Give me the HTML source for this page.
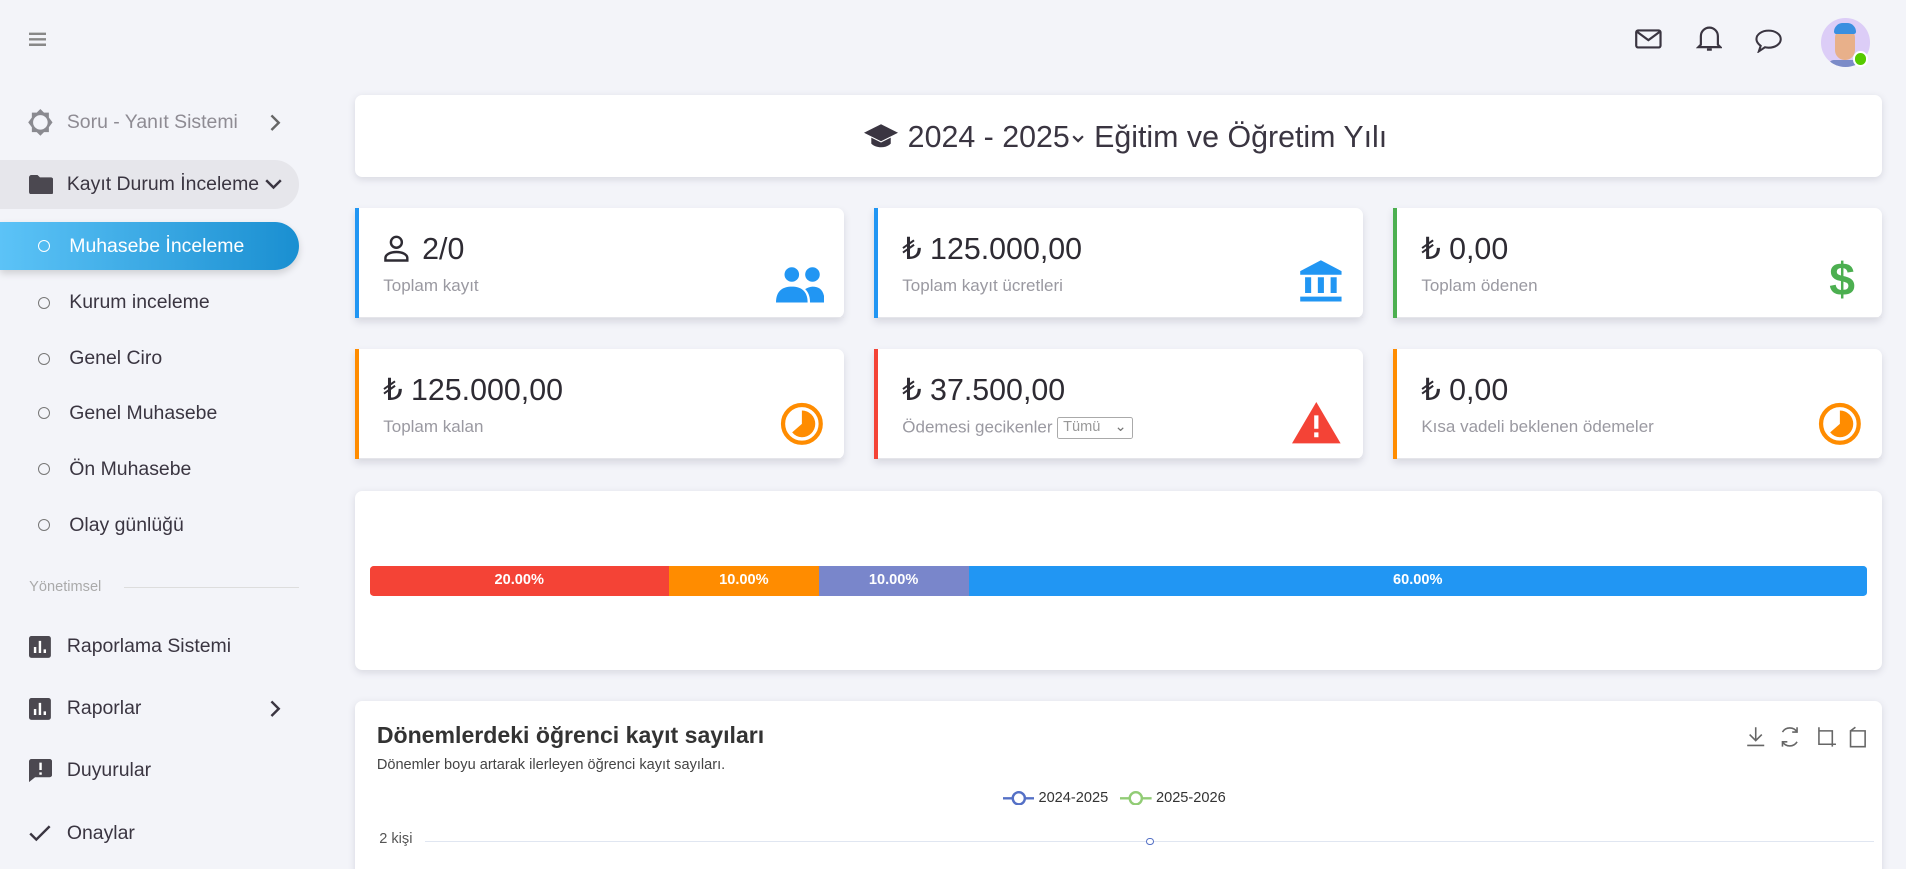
<!DOCTYPE html>
<html><head><meta charset="utf-8">
<style>
*{box-sizing:border-box;margin:0;padding:0}
html,body{width:1906px;height:869px;overflow:hidden;background:#f3f4f9}
#r{zoom:1.21556;width:1568px;height:715px;position:relative;font-family:"Liberation Sans",sans-serif;color:#333}
.a{position:absolute}
.nav{position:absolute;left:0;width:246px;height:40px;display:flex;align-items:center;font-size:16px;color:#3a3541}
.sub{padding-left:31px}
.sub .c{width:10px;height:10px;border:1.4px solid #777;border-radius:50%;margin-right:16px}
.card{position:absolute;background:#fff;border-radius:6px;box-shadow:0 2px 6px rgba(60,60,90,.15)}
.st{position:absolute;width:402px;height:91px;background:#fff;border-radius:0 6px 6px 0;box-shadow:0 3px 6px rgba(60,60,90,.15);border-left:4px solid}
.st .v{position:absolute;left:20px;top:20px;font-size:25px;color:#2e2b33}
.st .l{position:absolute;left:20px;top:56px;font-size:14px;color:#9a99a1}
.st .i{position:absolute;right:16px;top:44px}
.st:after{content:"";position:absolute;left:0;right:0;bottom:0;border-bottom:1px solid #e5e5ea}
.chev{position:absolute;left:221px}
</style></head><body><div id="r">
<svg class="a" style="left:24px;top:26px" width="14" height="12"><path d="M0 1.5h14M0 6h14M0 10.5h14" stroke="#888" stroke-width="2"/></svg>
<svg class="a" style="left:1345px;top:23px" width="22" height="18"><rect x="1" y="2" width="20" height="14" rx="1.5" fill="none" stroke="#3a3541" stroke-width="1.8"/><path d="M1.5 3l9.5 7 9.5-7" fill="none" stroke="#3a3541" stroke-width="1.8"/></svg>
<svg class="a" style="left:1395px;top:20px" width="22" height="24"><path d="M4 17V10a7 7 0 0114 0v7l2 2H2z" fill="none" stroke="#3a3541" stroke-width="1.8"/><path d="M9 21h4" stroke="#3a3541" stroke-width="2"/></svg>
<svg class="a" style="left:1443px;top:22px" width="24" height="22"><path d="M12 3c5.5 0 10 3 10 7s-4.5 7-10 7c-1 0-2 0-3-.3L4 20l1.5-4.5C3.5 14 2 12 2 10c0-4 4.5-7 10-7z" fill="none" stroke="#3a3541" stroke-width="1.7"/></svg>
<div class="a" style="left:1498px;top:15px;width:40px;height:40px;border-radius:50%;background:#dccdf7;overflow:hidden"><div class="a" style="left:12px;top:8px;width:16px;height:26px;border-radius:8px;background:#e8b08a"></div><div class="a" style="left:11px;top:4px;width:18px;height:9px;border-radius:8px 8px 2px 2px;background:#3a8fe0"></div><div class="a" style="left:7px;top:34px;width:26px;height:8px;background:#7b8bc8;border-radius:6px"></div></div>
<div class="a" style="left:1524px;top:42px;width:13px;height:13px;border-radius:50%;background:#56ca00;border:2px solid #fff"></div>

<div class="nav" style="top:81px;color:#8e8b93;padding-left:22px"><svg width="22" height="22" style="margin-right:11px"><path d="M11 0l3 3h4v4l3 4-3 4v4h-4l-3 3-3-3H4v-4l-3-4 3-4V3h4z" fill="#8a8a90"/><circle cx="11" cy="11" r="6" fill="#f3f4f9"/></svg>Soru - Yanıt Sistemi<svg class="chev" width="10" height="16"><path d="M2 2l6 6-6 6" fill="none" stroke="#666" stroke-width="2"/></svg></div>
<div class="nav" style="top:132px;background:#e6e6eb;border-radius:0 20px 20px 0;padding-left:24px"><svg width="20" height="16" style="margin-right:11px"><path d="M0 2a2 2 0 012-2h5l2 2h9a2 2 0 012 2v10a2 2 0 01-2 2H2a2 2 0 01-2-2z" fill="#4b4850"/></svg>Kayıt Durum İnceleme<svg width="14" height="9" style="margin-left:5px"><path d="M1 1l6 6 6-6" fill="none" stroke="#3a3541" stroke-width="2"/></svg></div>
<div class="nav sub" style="top:183px;height:39px;background:linear-gradient(90deg,#5cc3f7,#1a8fd1);border-radius:0 20px 20px 0;color:#fff;box-shadow:0 3px 6px rgba(0,0,0,.15)"><span class="c" style="border-color:#fff"></span>Muhasebe İnceleme</div>
<div class="nav sub" style="top:229px"><span class="c"></span>Kurum inceleme</div>
<div class="nav sub" style="top:275px"><span class="c"></span>Genel Ciro</div>
<div class="nav sub" style="top:320px"><span class="c"></span>Genel Muhasebe</div>
<div class="nav sub" style="top:366px"><span class="c"></span>Ön Muhasebe</div>
<div class="nav sub" style="top:412px"><span class="c"></span>Olay günlüğü</div>
<div class="a" style="left:24px;top:476px;font-size:12px;color:#aaa">Yönetimsel</div>
<div class="a" style="left:102px;top:483px;width:144px;border-top:1px solid #ddd"></div>
<div class="nav" style="top:512px;padding-left:24px"><svg width="18" height="18" style="margin-right:13px"><rect width="18" height="18" rx="2" fill="#4b4850"/><path d="M5 14V9M9 14V4M13 14V11" stroke="#fff" stroke-width="2"/></svg>Raporlama Sistemi</div>
<div class="nav" style="top:563px;padding-left:24px"><svg width="18" height="18" style="margin-right:13px"><rect width="18" height="18" rx="2" fill="#4b4850"/><path d="M5 14V9M9 14V4M13 14V11" stroke="#fff" stroke-width="2"/></svg>Raporlar<svg class="chev" width="10" height="16"><path d="M2 2l6 6-6 6" fill="none" stroke="#3a3541" stroke-width="2"/></svg></div>
<div class="nav" style="top:614px;padding-left:24px"><svg width="19" height="19" style="margin-right:12px"><path d="M2 0h15a2 2 0 012 2v11a2 2 0 01-2 2H5l-5 4V2a2 2 0 012-2z" fill="#4b4850"/><path d="M9.5 3v6M9.5 11v2" stroke="#fff" stroke-width="2"/></svg>Duyurular</div>
<div class="nav" style="top:666px;padding-left:24px"><svg width="18" height="14" style="margin-right:13px"><path d="M1 7l5 5L17 1" fill="none" stroke="#3a3541" stroke-width="2"/></svg>Onaylar</div>

<div class="card" style="left:292px;top:78px;width:1256px;height:68px"><div style="position:absolute;left:0;right:0;top:21px;text-align:center;font-size:25px;color:#3a3541;padding-left:12px"><svg width="28" height="22" style="vertical-align:-2px;margin-right:8px"><path d="M14 1L0 8l14 7 14-7z" fill="#3a3541"/><path d="M6 12v5c4 4 12 4 16 0v-5l-8 4z" fill="#3a3541"/></svg>2024 - 2025<svg width="10" height="8" style="margin:0 8px 2px 2px"><path d="M1 1l4 4 4-4" fill="none" stroke="#3a3541" stroke-width="1.8"/></svg>Eğitim ve Öğretim Yılı</div></div>

<div class="st" style="left:292px;top:171px;border-color:#2196f3"><div class="v"><svg width="22" height="22" style="vertical-align:-2px;margin-right:10px"><circle cx="11" cy="6" r="4.5" fill="none" stroke="#2e2b33" stroke-width="2"/><path d="M2 21v-2c0-3 4-5 9-5s9 2 9 5v2z" fill="none" stroke="#2e2b33" stroke-width="2"/></svg>2/0</div><div class="l">Toplam kayıt</div><svg class="i" width="40" height="30" style="top:48px"><circle cx="13" cy="7" r="6" fill="#2196f3"/><circle cx="30" cy="7" r="6" fill="#2196f3"/><path d="M0 30c0-10 6-13 13-13s13 3 13 13z" fill="#2196f3"/><path d="M28 30c0-6-2-9-4-11 2-1 4-2 6-2 6 0 10 3 10 13z" fill="#2196f3"/></svg></div>
<div class="st" style="left:719px;top:171px;border-color:#2196f3"><div class="v">₺ 125.000,00</div><div class="l">Toplam kayıt ücretleri</div><svg class="i" width="36" height="36" style="top:42px"><path d="M18 1L1 10v3h34v-3z" fill="#2196f3"/><path d="M5 15h5v13H5zM15.5 15h5v13h-5zM26 15h5v13h-5zM1 31h34v4H1z" fill="#2196f3"/></svg></div>
<div class="st" style="left:1146px;top:171px;border-color:#4caf50"><div class="v">₺ 0,00</div><div class="l">Toplam ödenen</div><div class="i" style="top:36px;right:22px;font-size:38px;font-weight:bold;color:#4caf50">$</div></div>
<div class="st" style="left:292px;top:287px;border-color:#ff8c00"><div class="v">₺ 125.000,00</div><div class="l">Toplam kalan</div><svg class="i" width="36" height="36" style="top:44px"><circle cx="18" cy="18" r="15.5" fill="none" stroke="#ff8c00" stroke-width="3.5"/><path d="M18 7a11 11 0 110 22 11 11 0 01-8-4l8-7z" fill="#ff8c00"/></svg></div>
<div class="st" style="left:719px;top:287px;border-color:#f44336"><div class="v">₺ 37.500,00</div><div class="l">Ödemesi gecikenler <span style="display:inline-block;border:1px solid #aaa;border-radius:2px;font-size:12px;padding:0 4px;width:62px;height:18px;line-height:16px;vertical-align:middle;color:#999">Tümü <span style="float:right;color:#777">&#8964;</span></span></div><svg class="i" width="40" height="34" style="top:44px;right:18px"><path d="M20 0L40 34H0z" fill="#f44336"/><path d="M20 11v11M20 25v4" stroke="#fff" stroke-width="3.5"/></svg></div>
<div class="st" style="left:1146px;top:287px;border-color:#ff8c00"><div class="v">₺ 0,00</div><div class="l">Kısa vadeli beklenen ödemeler</div><svg class="i" width="36" height="36" style="top:44px"><circle cx="18" cy="18" r="15.5" fill="none" stroke="#ff8c00" stroke-width="3.5"/><path d="M18 7a11 11 0 110 22 11 11 0 01-8-4l8-7z" fill="#ff8c00"/></svg></div>

<div class="card" style="left:292px;top:404px;width:1256px;height:147px"><div style="position:absolute;left:12px;top:62px;width:1232px;height:24px;display:flex;font-size:12px;font-weight:bold;color:#fff;line-height:24px;text-align:center;border-radius:3px;overflow:hidden"><div style="width:20%;background:#f44336">20.00%</div><div style="width:10%;background:#ff8c00">10.00%</div><div style="width:10%;background:#7986cb">10.00%</div><div style="width:60%;background:#2196f3">60.00%</div></div></div>

<div class="card" style="left:292px;top:577px;width:1256px;height:160px">
<div class="a" style="left:18px;top:17px;font-size:19px;font-weight:bold;color:#333">Dönemlerdeki öğrenci kayıt sayıları</div>
<div class="a" style="left:18px;top:46px;font-size:12px;color:#444">Dönemler boyu artarak ilerleyen öğrenci kayıt sayıları.</div>
<svg class="a" style="left:1144px;top:20px" width="104" height="18"><g fill="none" stroke="#666" stroke-width="1.3"><path d="M8 1v11M3 7l5 5 5-5M1 16h14"/><path d="M42 5a7 7 0 00-12 0M30 13a7 7 0 0012 0M42 1v4h-4M30 17v-4h4"/><path d="M60 1v14h14M60 4h11v13"/><path d="M86 4h12v13H86zM86 4l4-3"/></g></svg>
<div class="a" style="left:533px;top:73px;font-size:12px;color:#333;display:flex;align-items:center"><svg width="26" height="12"><path d="M0 6h26" stroke="#5470c6" stroke-width="2"/><circle cx="13" cy="6" r="5" fill="#fff" stroke="#5470c6" stroke-width="2"/></svg>&nbsp;2024-2025&nbsp;&nbsp;&nbsp;<svg width="26" height="12"><path d="M0 6h26" stroke="#91cc75" stroke-width="2"/><circle cx="13" cy="6" r="5" fill="#fff" stroke="#91cc75" stroke-width="2"/></svg>&nbsp;2025-2026</div>
<div class="a" style="left:20px;top:107px;font-size:12px;color:#555">2 kişi</div>
<div class="a" style="left:58px;top:115px;width:1192px;border-top:1px solid #e0e6f1"></div>
<div class="a" style="left:651px;top:112px;width:6px;height:6px;border-radius:50%;border:1.5px solid #5470c6;background:#fff"></div>
</div>
</div></body></html>
